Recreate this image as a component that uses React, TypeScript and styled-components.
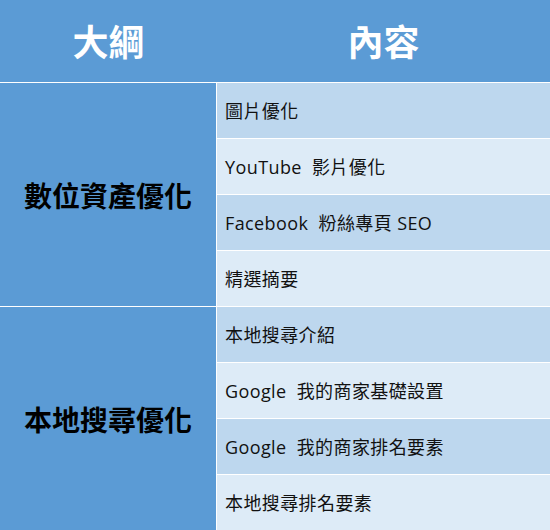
import React from "react";
import styled, { createGlobalStyle } from "styled-components";

const Global = createGlobalStyle`
  html, body { margin: 0; padding: 0; background: #ffffff; }
  body { font-family: "Open Sans", "Noto Sans CJK TC", sans-serif; }
`;

const Table = styled.div`
  display: grid;
  grid-template-columns: 216px 333px;
  grid-template-rows: 82px repeat(8, 55px);
  gap: 1px;
  background: #ffffff;
  width: 550px;
  height: 530px;
`;

const HeadRow = styled.div`
  grid-column: 1 / span 2;
  display: grid;
  grid-template-columns: 217px 333px;
  background: #5b9bd5;
`;

const HeadCell = styled.div`
  color: #ffffff;
  display: flex;
  align-items: center;
  justify-content: center;
  font-family: "Noto Sans CJK TC", sans-serif;
  font-weight: 700;
  font-size: 36px;
  padding-bottom: 2px;
`;

const GroupCell = styled.div<{ $row: number }>`
  grid-column: 1;
  grid-row: ${(p) => p.$row} / span 4;
  background: #5b9bd5;
  color: #000000;
  display: flex;
  align-items: center;
  justify-content: center;
  font-family: "Noto Sans CJK TC", sans-serif;
  font-weight: 700;
  font-size: 28px;
`;

const ItemCell = styled.div<{ $alt: boolean }>`
  grid-column: 2;
  background: ${(p) => (p.$alt ? "#ddebf7" : "#bdd7ee")};
  color: #111111;
  display: flex;
  align-items: center;
  padding-left: 8px;
  font-family: "Open Sans", "Noto Sans CJK TC", sans-serif;
  font-size: 18px;
  letter-spacing: 0.4px;
  white-space: pre;
  padding-bottom: 1px;
`;

const groups = [
  {
    title: "數位資產優化",
    items: ["圖片優化", "YouTube  影片優化", "Facebook  粉絲專頁 SEO", "精選摘要"],
  },
  {
    title: "本地搜尋優化",
    items: ["本地搜尋介紹", "Google  我的商家基礎設置", "Google  我的商家排名要素", "本地搜尋排名要素"],
  },
];

export default function App() {
  return (
    <>
      <Global />
      <Table>
        <HeadRow>
          <HeadCell>大綱</HeadCell>
          <HeadCell>內容</HeadCell>
        </HeadRow>
        {groups.map((g, gi) => (
          <React.Fragment key={g.title}>
            <GroupCell $row={2 + gi * 4}>{g.title}</GroupCell>
            {g.items.map((it, i) => (
              <ItemCell key={it} $alt={i % 2 === 1} style={{ gridRow: 2 + gi * 4 + i }}>
                {it}
              </ItemCell>
            ))}
          </React.Fragment>
        ))}
      </Table>
    </>
  );
}
